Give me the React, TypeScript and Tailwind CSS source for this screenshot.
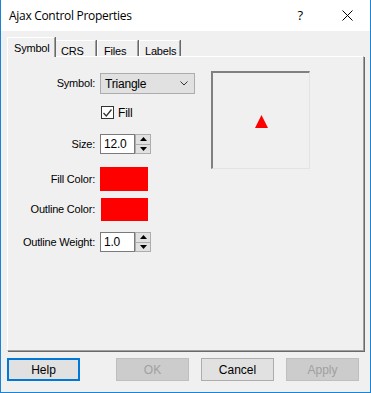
import React from "react";

function Spinner({ value }: { value: string }) {
  return (
    <div className="flex h-[20px]">
      <div className="w-[35px] h-full bg-white border border-[#7a7a7a] flex items-center pl-[3px] text-[12px] text-black">
        {value}
      </div>
      <div className="w-[16px] h-full border border-[#adadad] flex flex-col">
        <div className="flex-1 bg-[#e1e1e1] border-b border-[#adadad] flex items-center justify-center">
          <svg width="7" height="4" viewBox="0 0 7 4">
            <path d="M3.5 0 L7 4 L0 4 Z" fill="#000" />
          </svg>
        </div>
        <div className="flex-1 bg-[#e1e1e1] flex items-center justify-center">
          <svg width="7" height="4" viewBox="0 0 7 4">
            <path d="M0 0 L7 0 L3.5 4 Z" fill="#000" />
          </svg>
        </div>
      </div>
    </div>
  );
}

function Row({ label, children, className }: { label: string; children: React.ReactNode; className?: string }) {
  return (
    <div className={"flex items-center " + (className ?? "")}>
      <div className="w-[88px] text-right pr-[1px]">{label}</div>
      <div className="ml-[4px]">{children}</div>
    </div>
  );
}

export default function App() {
  const tabs = ["CRS", "Files", "Labels"];
  return (
    <div className="w-[371px] h-[393px] border-x border-b border-[#1883d7] bg-[#f0f0f0] flex flex-col font-['Liberation_Sans',sans-serif] text-[11px] text-black tracking-[-0.2px]">
      {/* title bar */}
      <div className="h-[31px] bg-white flex items-center pl-[8px] shrink-0">
        <span className="text-[12px] tracking-[-0.3px] font-['Open_Sans',sans-serif] text-[#000]">Ajax Control Properties</span>
        <span className="ml-auto text-[13px] font-['Open_Sans',sans-serif] mr-[39px]">?</span>
        <svg width="11" height="11" viewBox="0 0 11 11" className="mr-[17px]">
          <path d="M0.5 0.5 L10.5 10.5 M10.5 0.5 L0.5 10.5" stroke="#000" strokeWidth="1" />
        </svg>
      </div>

      {/* tabs */}
      <div className="mt-[6px] px-[6px] flex items-end h-[19px] relative z-10">
        <div className="h-[20px] w-[48px] -mb-[1px] bg-[#f0f0f0] border-l border-t border-white shadow-[1px_0_0_#696969] border-r border-r-[#a0a0a0] pl-[6px] pt-[2px]">
          Symbol
        </div>
        {tabs.map((t, i) => (
          <div
            key={t}
            className={
              "h-[16px] border-t border-white border-r border-r-[#a0a0a0] shadow-[1px_0_0_#696969] pt-[2px] " +
              (i === 0 ? "w-[40px] pl-[5px] ml-[1px]" : i === 1 ? "w-[41px] pl-[6px] ml-[1px] border-l" : "w-[41px] pl-[5px] ml-[1px] border-l")
            }
          >
            {t}
          </div>
        ))}
      </div>

      {/* panel */}
      <div className="mx-[6px] h-[295px] border-l border-t border-white border-r border-b border-r-[#a0a0a0] border-b-[#a0a0a0] shadow-[1px_1px_0_#696969] flex">
        <div className="w-[188px] flex flex-col">
          <Row label="Symbol:" className="mt-[16px]">
            <div className="w-[95px] h-[21px] bg-[#e1e1e1] border border-[#adadad] flex items-center pl-[4px] text-[12px]">
              Triangle
              <svg width="8" height="5" viewBox="0 0 8 5" className="ml-auto mr-[6px]">
                <path d="M0.5 0.5 L4 4 L7.5 0.5" stroke="#333" strokeWidth="1" fill="none" />
              </svg>
            </div>
          </Row>
          <div className="flex items-center mt-[12px] ml-[93px] h-[13px]">
            <div className="w-[13px] h-[13px] border border-[#333] bg-white flex items-center justify-center">
              <svg width="9" height="8" viewBox="0 0 9 8">
                <path d="M0.5 4 L3.3 7 L8.5 0.5" stroke="#333" strokeWidth="1.3" fill="none" />
              </svg>
            </div>
            <span className="ml-[4px] text-[12px]">Fill</span>
          </div>
          <Row label="Size:" className="mt-[15px]">
            <Spinner value="12.0" />
          </Row>
          <Row label="Fill Color:" className="mt-[13px]">
            <div className="w-[48px] h-[24px] bg-[#ff0000]" />
          </Row>
          <Row label="Outline Color:" className="mt-[7px]">
            <div className="w-[47px] h-[23px] bg-[#ff0000] ml-[1px]" />
          </Row>
          <Row label="Outline Weight:" className="mt-[11px]">
            <Spinner value="1.0" />
          </Row>
        </div>
        <div className="ml-[15px] mt-[14px] w-[99px] h-[98px] border-t-2 border-l-2 border-t-[#808080] border-l-[#808080] border-r border-b border-r-[#e3e3e3] border-b-[#e3e3e3] flex items-center justify-center">
          <svg width="13" height="13" viewBox="0 0 13 13" className="mt-[1px]">
            <path d="M6.5 0 L13 13 L0 13 Z" fill="#ff0000" />
          </svg>
        </div>
      </div>

      {/* buttons */}
      <div className="mt-[7px] flex px-[6px] text-[12px]">
        <button className="w-[73px] h-[23px] bg-[#e1e1e1] border-2 border-[#0078d7] tracking-normal">Help</button>
        <button className="w-[73px] h-[23px] ml-[36px] bg-[#cccccc] border border-[#bfbfbf] text-[#a0a0a0] tracking-normal">OK</button>
        <button className="w-[73px] h-[23px] ml-[12px] bg-[#e1e1e1] border border-[#adadad] tracking-normal">Cancel</button>
        <button className="w-[73px] h-[23px] ml-[12px] bg-[#cccccc] border border-[#bfbfbf] text-[#a0a0a0] tracking-normal">Apply</button>
      </div>
    </div>
  );
}
